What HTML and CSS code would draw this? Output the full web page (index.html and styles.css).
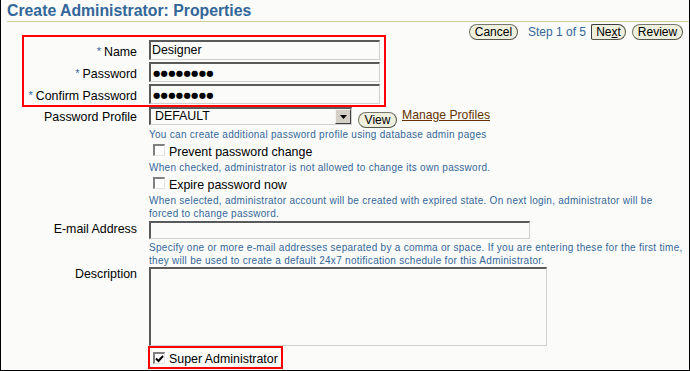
FILE: index.html
```html
<!DOCTYPE html>
<html lang="en">
<head>
<meta charset="utf-8">
<title>Create Administrator: Properties</title>
<link rel="stylesheet" href="styles.css">
</head>
<body>
<div class="page">
  <div class="header">
    <h1 class="title">Create Administrator: Properties</h1>
  </div>
  <div class="toolbar">
    <button class="btn btn-cancel" type="button">Cancel</button>
    <span class="step">Step 1 of 5</span>
    <button class="btn btn-next" type="button">Ne<u>x</u>t</button>
    <button class="btn btn-review" type="button">Review</button>
  </div>

  <div class="required-box">
    <div class="flabel"><span class="req">*</span>Name</div>
    <div class="field">Designer</div>
    <div class="flabel"><span class="req">*</span>Password</div>
    <div class="field field-pw"><span class="dots">●●●●●●●●</span></div>
    <div class="flabel"><span class="req">*</span>Confirm Password</div>
    <div class="field field-pw"><span class="dots">●●●●●●●●</span></div>
  </div>

  <div class="form">
    <div class="flabel lbl-profile">Password Profile</div>
    <div class="fcell">
      <div class="profile-row">
        <div class="select">
          <span class="select-text">DEFAULT</span>
          <span class="select-arrow">
            <svg width="7" height="4" viewBox="0 0 7 4"><path d="M0 0H7L3.5 4Z" fill="#000"/></svg>
          </span>
        </div>
        <button class="btn btn-view" type="button">View</button>
        <a class="link" href="#">Manage Profiles</a>
      </div>
      <div class="help help-first">You can create additional password profile using database admin pages</div>
      <div class="cb-row">
        <span class="cbox"></span>
        <span class="cb-label">Prevent password change</span>
      </div>
      <div class="help">When checked, administrator is not allowed to change its own password.</div>
      <div class="cb-row">
        <span class="cbox"></span>
        <span class="cb-label">Expire password now</span>
      </div>
      <div class="help">When selected, administrator account will be created with expired state. On next login, administrator will be<br>forced to change password.</div>
    </div>

    <div class="flabel lbl-email">E-mail Address</div>
    <div class="fcell">
      <div class="field field-email"></div>
      <div class="help help-email">Specify one or more e-mail addresses separated by a comma or space. If you are entering these for the first time,<br>they will be used to create a default 24x7 notification schedule for this Administrator.</div>
    </div>

    <div class="flabel lbl-desc">Description</div>
    <div class="fcell">
      <div class="field field-desc"></div>
      <div class="super-box">
        <span class="cbox cbox-checked">
          <svg width="9" height="8" viewBox="0 0 9 8"><path d="M1 3.5L3.5 6L8 1" fill="none" stroke="#000" stroke-width="2"/></svg>
        </span>
        <span class="cb-label">Super Administrator</span>
      </div>
    </div>
  </div>
</div>
</body>
</html>
```

FILE: styles.css
```css
* { box-sizing: border-box; }
html, body { margin: 0; padding: 0; background: #fbfcfa; }
body { font-family: "Liberation Sans", Arial, sans-serif; color: #000; }

.page {
  width: 690px;
  height: 371px;
  border: 1px solid #000;
  border-top: 0;
  background: #fbfcfa;
  overflow: hidden;
}

.header {
  margin-left: 6px;
  padding: 2px 0 1px 0;
  border-bottom: 1px solid #cccc99;
}
.title {
  margin: 0;
  font-size: 15.8px;
  line-height: 18px;
  font-weight: bold;
  color: #336699;
}

.toolbar {
  display: flex;
  justify-content: flex-end;
  align-items: center;
  height: 16px;
  margin: 2px 0 -5px 0;
  padding-right: 6px;
}
.btn {
  height: 16px;
  padding: 0;
  border: 1px solid #77776a;
  border-right-color: #55554a;
  border-bottom-color: #55554a;
  border-radius: 8px;
  background: #efefde;
  font-family: "Liberation Sans", Arial, sans-serif;
  font-size: 12px;
  line-height: 14px;
  color: #000;
  text-align: center;
}
.btn-cancel { width: 49px; }
.btn-next {
  width: 35px;
  margin-left: 5px;
  border-radius: 2px 8px 8px 2px;
  border-left-color: #3c3c3c;
  border-top-color: #3c3c3c;
}
.btn-review { width: 51px; margin-left: 6px; }
.step {
  margin-left: 10px;
  font-size: 12px;
  line-height: 14px;
  color: #336699;
}

.flabel {
  text-align: right;
  font-size: 12.4px;
  line-height: 15px;
  white-space: nowrap;
}
.req {
  color: #336699;
  font-size: 11px;
  margin-right: 3px;
  vertical-align: 1px;
}

.required-box {
  display: grid;
  grid-template-columns: 113px 231px;
  column-gap: 12px;
  row-gap: 2px;
  width: 364px;
  margin-left: 21px;
  padding: 3px 4px 1px 0;
  border: 2px solid #ff0000;
}
.required-box .flabel { padding-top: 4px; }

.field {
  height: 20px;
  border-style: solid;
  border-width: 2px 1px 1px 2px;
  border-color: #5a5a5a #d0d0d0 #d0d0d0 #5a5a5a;
  background: #fbfcfa;
  padding-left: 1px;
  font-size: 12.4px;
  line-height: 17px;
}
.field-pw { padding-left: 2px; }
.dots {
  font-family: "DejaVu Sans", sans-serif;
  font-size: 8.4px;
  letter-spacing: 0.3px;
  line-height: 17px;
}

.form {
  display: grid;
  grid-template-columns: 136px 1fr;
  column-gap: 12px;
}
.fcell { display: flex; flex-direction: column; align-items: flex-start; }
.lbl-profile { padding-top: 3px; }
.lbl-email { padding-top: 2px; }
.lbl-desc { padding-top: 0; }

.profile-row {
  display: flex;
  align-items: flex-start;
  height: 18px;
}
.select {
  display: flex;
  width: 203px;
  height: 18px;
  border-style: solid;
  border-width: 2px 1px 1px 2px;
  border-color: #5a5a5a #d0d0d0 #d0d0d0 #5a5a5a;
  background: #fbfcfa;
}
.select-text {
  flex: 1;
  padding-left: 4px;
  font-size: 12.4px;
  line-height: 15px;
}
.select-arrow {
  display: flex;
  align-items: center;
  justify-content: center;
  width: 16px;
  height: 15px;
  background: #d4d0c8;
  border-style: solid;
  border-width: 1px;
  border-color: #f4f4f4 #404040 #404040 #f4f4f4;
}
.btn-view { width: 39px; margin: 5px 0 0 6px; }
.link {
  margin: 1px 0 0 5px;
  font-size: 12.2px;
  line-height: 15px;
  color: #663300;
  text-decoration: underline;
}

.help {
  font-size: 10px;
  line-height: 13px;
  letter-spacing: 0.28px;
  color: #336699;
  white-space: nowrap;
}
.help-first { margin-top: 3px; }

.cb-row {
  display: flex;
  align-items: flex-start;
  height: 17px;
  margin-top: 3px;
  padding-left: 4px;
}
.cbox {
  display: flex;
  align-items: center;
  justify-content: center;
  width: 12px;
  height: 12px;
  border-style: solid;
  border-width: 2px 1px 1px 2px;
  border-color: #808080 #e4e4e4 #e4e4e4 #808080;
  background: #fff;
}
.cb-label {
  margin: 1px 0 0 4px;
  font-size: 12.4px;
  line-height: 15px;
}

.field-email { width: 381px; height: 18px; margin-top: 1px; }
.help-email { margin-top: 2px; }
.field-desc { width: 398px; height: 79px; }

.super-box {
  display: flex;
  align-items: flex-start;
  width: 135px;
  height: 23px;
  margin-left: -1px;
  padding: 4px 3px 0 3px;
  border: 2px solid #ff0000;
}
.super-box .cb-label { margin-top: 0; }
```
